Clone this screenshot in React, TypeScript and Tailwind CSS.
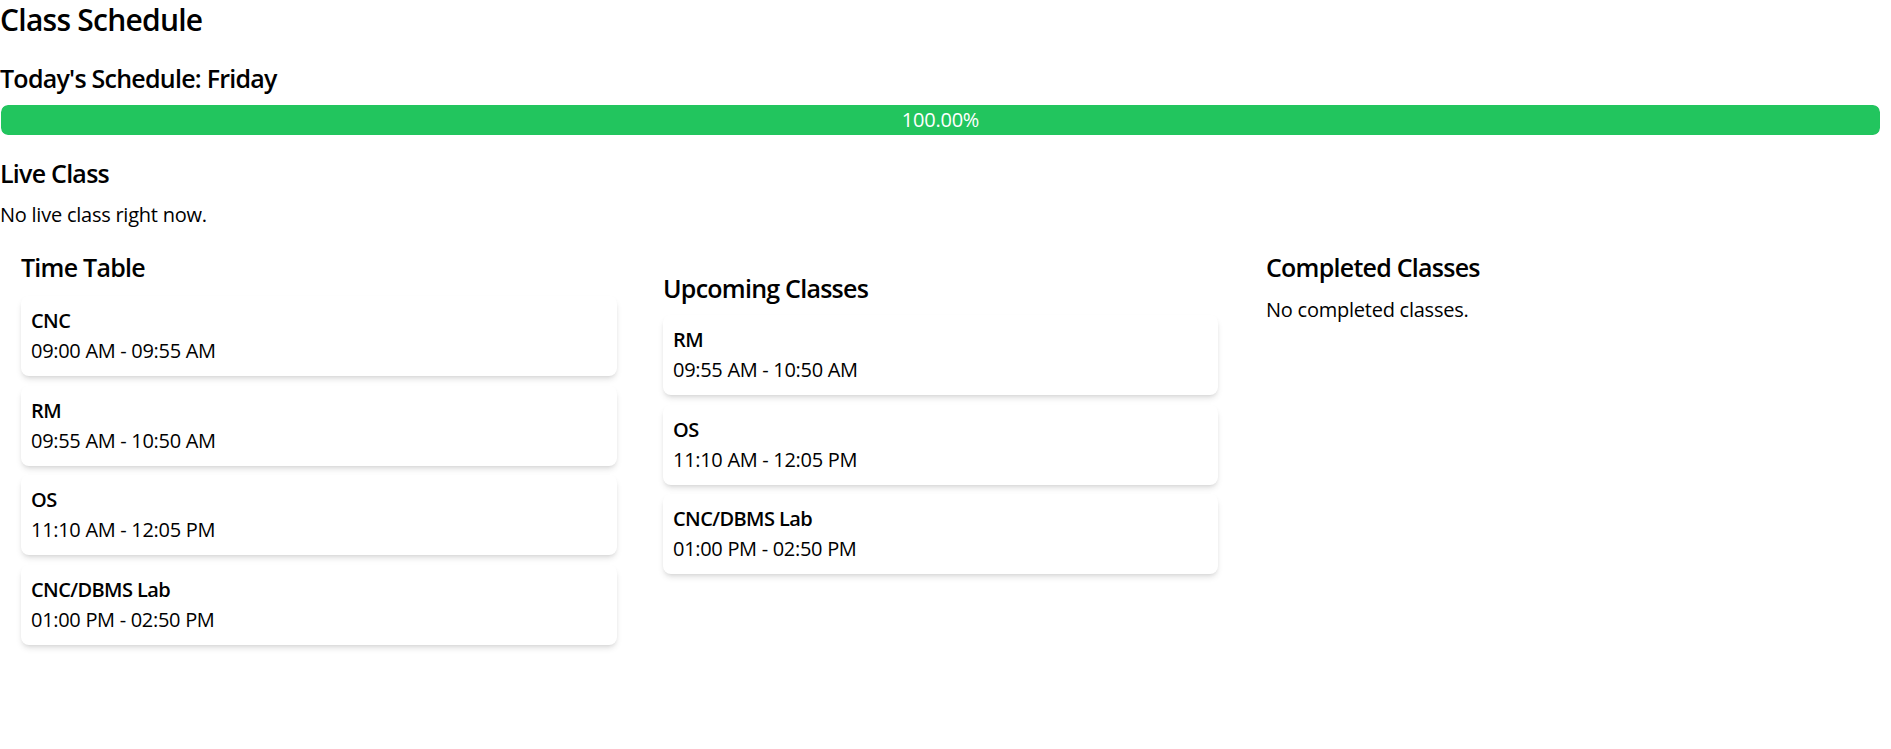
import React from "react";

type Cls = { name: string; time: string };

const timetable: Cls[] = [
  { name: "CNC", time: "09:00 AM - 09:55 AM" },
  { name: "RM", time: "09:55 AM - 10:50 AM" },
  { name: "OS", time: "11:10 AM - 12:05 PM" },
  { name: "CNC/DBMS Lab", time: "01:00 PM - 02:50 PM" },
];

const upcoming: Cls[] = timetable.slice(1);

function Card({ c }: { c: Cls }) {
  return (
    <div className="bg-white rounded-[8px] shadow-[0_4px_6px_-1px_rgba(0,0,0,0.12),0_2px_4px_-2px_rgba(0,0,0,0.1)] px-[10px] py-[10px] h-[80px]">
      <div className="font-semibold text-[20px] leading-[30px] text-black tracking-[-0.03em]">{c.name}</div>
      <div className="text-[20px] leading-[30px] text-black tracking-[-0.015em]">{c.time}</div>
    </div>
  );
}

export default function App() {
  const progress = 100;
  return (
    <div className="min-h-screen bg-white text-black font-['Segoe_UI','Open_Sans',sans-serif] tracking-[-0.015em]">
      <h1 className="text-[30px] leading-[40px] font-semibold tracking-[-0.025em]">Class Schedule</h1>
      <h2 className="mt-[21px] text-[25px] leading-[35px] font-semibold tracking-[-0.03em]">Today's Schedule: Friday</h2>
      <div className="mt-[9px] ml-px w-[1879px] h-[30px] rounded-[7px] bg-gray-200 overflow-hidden">
        <div
          className="h-full bg-[#22c55e] rounded-[7px] flex items-center justify-center text-white text-[20px] leading-[30px]"
          style={{ width: `${progress}%` }}
        >
          {progress.toFixed(2)}%
        </div>
      </div>
      <h2 className="mt-[21px] text-[25px] leading-[35px] font-semibold tracking-[-0.03em]">Live Class</h2>
      <p className="mt-[9px] text-[20px] leading-[30px]">No live class right now.</p>
      <div className="mt-[20px] flex items-start pl-[21px]">
        <section className="w-[596px]">
          <h3 className="text-[25px] leading-[35px] font-semibold tracking-[-0.03em]">Time Table</h3>
          <div className="mt-[11px] flex flex-col gap-[9.5px]">
            {timetable.map((c) => (
              <Card key={c.name} c={c} />
            ))}
          </div>
        </section>
        <section className="ml-[46px] w-[555px] pt-[21px]">
          <h3 className="text-[25px] leading-[35px] font-semibold tracking-[-0.03em]">Upcoming Classes</h3>
          <div className="mt-[9px] flex flex-col gap-[9.5px]">
            {upcoming.map((c) => (
              <Card key={c.name} c={c} />
            ))}
          </div>
        </section>
        <section className="ml-[48px] flex-1">
          <h3 className="text-[25px] leading-[35px] font-semibold tracking-[-0.03em]">Completed Classes</h3>
          <p className="mt-[10px] text-[20px] leading-[30px]">No completed classes.</p>
        </section>
      </div>
    </div>
  );
}
